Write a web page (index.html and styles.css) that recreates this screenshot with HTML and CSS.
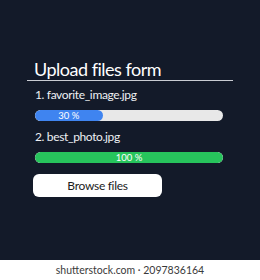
FILE: index.html
```html
<!DOCTYPE html>
<html lang="en">

<head>
    <meta charset="UTF-8">
    <meta name="viewport" content="width=device-width, initial-scale=1.0">
    <title>Upload files form</title>
    <link rel="stylesheet" href="styles.css">
</head>

<body>
    <div id="stage">
        <div class="form">
            <h1 class="title">Upload files form</h1>

            <div class="file">
                <p class="name">1. favorite_image.jpg</p>
                <div class="track">
                    <div class="fill blue" style="width: 36%">30 %</div>
                </div>
            </div>

            <div class="file">
                <p class="name">2. best_photo.jpg</p>
                <div class="track">
                    <div class="fill green" style="width: 100%">100 %</div>
                </div>
            </div>

            <button class="browse">Browse files</button>
        </div>
    </div>
    <div class="credit">shutterstock.com · 2097836164</div>
</body>

</html>
```

FILE: styles.css
```css
* {
    margin: 0;
    padding: 0;
    box-sizing: border-box;
    border: none;
    outline: none;
}

body {
    width: 260px;
    height: 280px;
    overflow: hidden;
    background-color: white;
    font-family: Lato, "Open Sans", sans-serif;
}

#stage {
    height: 260px;
    padding: 58px 27px 0 27px;
    background-color: #131a29;
}

.form {
    width: 206px;
}

.title {
    font-size: 18px;
    line-height: 22px;
    font-weight: 400;
    letter-spacing: -0.5px;
    color: white;
    padding-left: 7px;
    border-bottom: 1px solid #c9ccd2;
}

.file {
    padding: 7px 10px 0 8px;
}

.file + .file {
    padding-top: 9px;
}

.name {
    font-size: 12px;
    line-height: 14px;
    letter-spacing: -0.35px;
    color: #eef0f3;
}

.track {
    margin-top: 8px;
    height: 11px;
    border-radius: 6px;
    background-color: #e8e8e8;
    overflow: hidden;
}

.fill {
    height: 11px;
    border-radius: 6px;
    font-size: 9.5px;
    line-height: 11px;
    color: white;
    text-align: center;
}

.blue {
    background-color: #3f84f0;
}

.green {
    background-color: #27c45c;
}

.browse {
    display: block;
    margin: 11px 0 0 6px;
    width: 129px;
    height: 23px;
    border-radius: 6px;
    background-color: white;
    color: #1c1c1c;
    font-family: Lato, "Open Sans", sans-serif;
    font-size: 12px;
    letter-spacing: -0.3px;
    cursor: pointer;
}

.credit {
    height: 20px;
    line-height: 20px;
    text-align: center;
    font-family: Lato, "Liberation Sans", sans-serif;
    font-size: 10.5px;
    color: #3a3a3a;
}
```
